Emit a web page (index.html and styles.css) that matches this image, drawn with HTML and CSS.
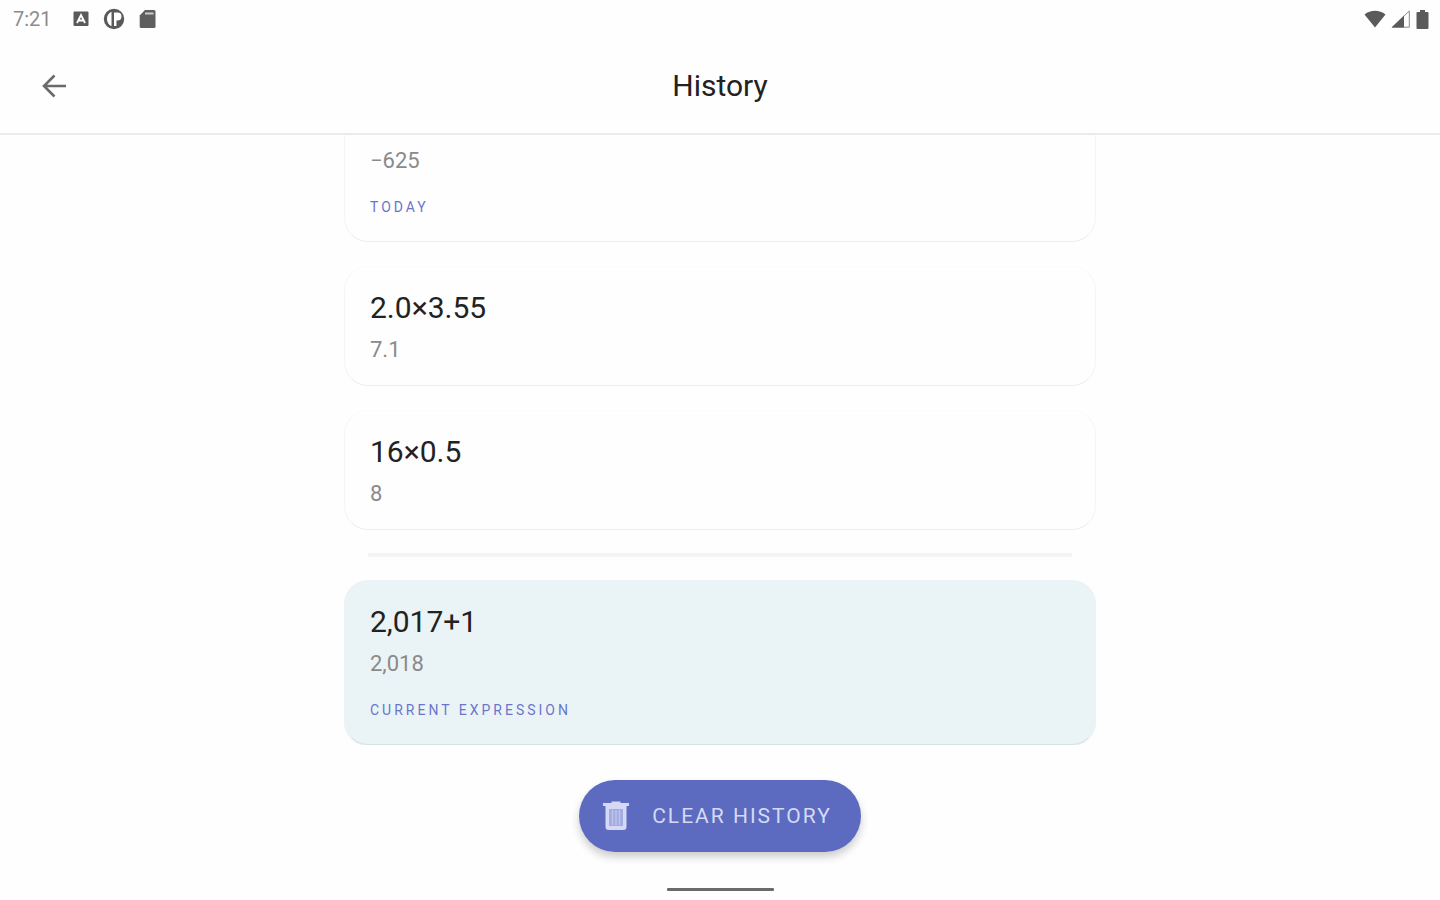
FILE: index.html
```
<!DOCTYPE html>
<html lang="en">
<head>
  <meta charset="UTF-8">
  <meta name="viewport" content="width=device-width, initial-scale=1">
  <title>History</title>
  <link rel="stylesheet" href="styles.css">
</head>
<body>
  <div class="status-bar">
    <div class="status-left">
      <span class="clock">7:21</span>
      <svg width="16" height="16" viewBox="0 0 16 16"><rect x="0.5" y="0.5" width="15" height="14.5" rx="1" fill="#5a5a5a"/><path d="M4 12 8 4l4 8M5.5 9.5h5" fill="none" stroke="#fff" stroke-width="1.8"/></svg>
      <svg width="22" height="22" viewBox="0 0 22 22"><circle cx="11" cy="11" r="9" fill="#5a5a5a" stroke="#5a5a5a" stroke-width="2.4"/><path d="M8.500 3.800v14.400a8 8 0 0 1 0-14.400z" fill="#fff"/><path d="M11 4.500h3.500a4 4 0 0 1 0 8H13.500V18H11z" fill="#fff"/></svg>
      <svg width="17" height="20" viewBox="0 0 17 20"><path d="M6 1h9a1.500 1.500 0 0 1 1.500 1.500v15A1.500 1.500 0 0 1 15 19H2.200a1.500 1.500 0 0 1-1.500-1.500V6.500z" fill="#5f5f5f"/><path d="M6 4.500h8.500" stroke="#ccc" stroke-width="2"/></svg>
    </div>
    <div class="status-right">
      <svg width="22" height="18" viewBox="0 0 22 18"><path d="M0.500 4.500C6.500-.5 15.500-.5 21.500 4.500L11 17.500z" fill="#5a5a5a"/></svg>
      <svg width="20" height="18" viewBox="0 0 20 18"><path d="M1.500 17.200 18.300 1v16.200z" fill="#fff" stroke="#8a8a8a"/><path d="M0.500 17.500 13 5.500v12z" fill="#5a5a5a"/></svg>
      <svg width="13" height="19" viewBox="0 0 13 19"><path d="M4 0h5v2h2.500a1 1 0 0 1 1 1v15a1 1 0 0 1-1 1h-10a1 1 0 0 1-1-1V3a1 1 0 0 1 1-1H4z" fill="#5a5a5a"/></svg>
    </div>
  </div>

  <header class="toolbar">
    <button class="back" aria-label="Back">
      <svg width="26" height="24" viewBox="0 0 26 24"><path d="M25 12H3M13.500 1.500 3 12l10.500 10.500" fill="none" stroke="#6a6a6a" stroke-width="2.600"/></svg>
    </button>
    <h1>History</h1>
  </header>

  <main class="history">
    <div class="card">
      <div class="result">−625</div>
      <div class="label">TODAY</div>
    </div>
    <div class="card">
      <div class="expression">2.0×3.55</div>
      <div class="result">7.1</div>
    </div>
    <div class="card">
      <div class="expression">16×0.5</div>
      <div class="result">8</div>
    </div>
    <hr class="divider">
    <div class="card current">
      <div class="expression">2,017+1</div>
      <div class="result">2,018</div>
      <div class="label">CURRENT EXPRESSION</div>
    </div>
  </main>

  <footer class="footer">
    <button class="clear">
      <svg width="28" height="30" viewBox="0 0 28 30"><path d="M1 3.500h26M9.500 2h9" fill="none" stroke="#d5d9f5" stroke-width="3"/><path d="M3.500 5h21v21a3 3 0 0 1-3 3h-15a3 3 0 0 1-3-3z" fill="#d5d9f5"/><path d="M7 8h14v17H7z" fill="#a3abdf"/><path d="M10.500 9v15M14 9v15M17.500 9v15" stroke="#bdc3eb" stroke-width="1.500"/></svg>
      <span>CLEAR HISTORY</span>
    </button>
    <div class="home-bar"></div>
  </footer>
</body>
</html>
```
FILE: styles.css
```
* { box-sizing: border-box; }
body { margin: 0; height: 100vh; display: flex; flex-direction: column; background: #fefefe; color: #222; font-family: Roboto, sans-serif; }
button { font-family: inherit; border: none; cursor: pointer; }
svg { display: block; flex: none; }

.status-bar { height: 38px; flex: none; display: flex; justify-content: space-between; align-items: center; padding: 0 11px 0 13px; }
.status-left { display: flex; align-items: center; gap: 14px; }
.status-right { display: flex; align-items: center; gap: 5px; }
.clock { font-size: 20px; line-height: 24px; color: #8c8c8c; margin-right: 7px; }

.toolbar { height: 97px; flex: none; display: grid; grid-template-columns: 1fr auto 1fr; align-items: center; padding: 0 41px; border-bottom: 2px solid #ebebeb; }
.toolbar h1 { margin: 0; font-size: 30px; line-height: 36px; font-weight: 400; }
.back { justify-self: start; padding: 0; background: none; }

.history { flex: 1; min-height: 0; overflow: hidden; display: flex; flex-direction: column; justify-content: flex-end; gap: 24px; width: 100%; max-width: 752px; margin: 0 auto; }
.card { flex: none; padding: 23px 25px; border: 1px solid #f5f5f5; border-top-color: #fbfbfb; border-bottom-color: #ededed; border-radius: 24px; }
.current { background: #eaf4f6; border-color: #eaf4f6; border-bottom-color: #d8e2e4; box-shadow: 0 1px 1px rgba(0,0,0,0.06); }
.expression { font-size: 30px; line-height: 36px; }
.result { margin-top: 12px; font-size: 22px; line-height: 24px; color: #8a8a8a; }
.label { margin-top: 24px; font-size: 14px; line-height: 21px; letter-spacing: 3px; color: #6a74cc; }
.divider { flex: none; width: auto; height: 4px; margin: -1px 24px; border: none; background: #f4f4f4; }

.footer { flex: none; display: flex; flex-direction: column; align-items: center; padding: 35px 0 9px; }
.clear { display: flex; align-items: center; gap: 22px; height: 72px; padding: 0 29px 0 23px; border-radius: 36px; background: #5c6bc0; color: #d5d9f5; font-size: 21px; letter-spacing: 2px; box-shadow: 0 5px 9px rgba(0,0,0,0.2); }
.home-bar { width: 107px; height: 3px; margin-top: 36px; border-radius: 1px; background: #6a6a6a; }
```
